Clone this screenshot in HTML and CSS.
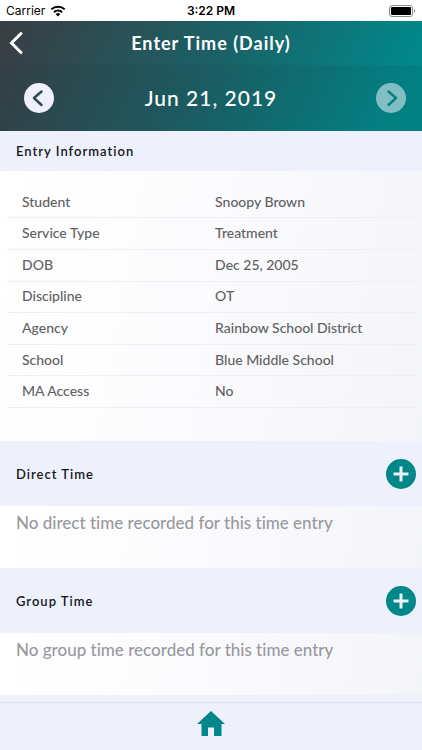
FILE: index.html
```html
<!DOCTYPE html>
<html lang="en">
<head>
<meta charset="utf-8">
<meta name="viewport" content="width=device-width, initial-scale=1">
<title>Enter Time (Daily)</title>
<link rel="stylesheet" href="styles.css">
</head>
<body>
<div class="app">
  <div class="status">
    <div class="carrier">Carrier
      <svg width="16" height="12" viewBox="0 0 16 12" aria-hidden="true"><g fill="none" stroke="#000" stroke-width="2"><path d="M1.3 4.4a9.6 9.6 0 0 1 13.4 0"/><path d="M3.9 7.2a5.9 5.9 0 0 1 8.2 0"/></g><path d="M5.7 9.2a3.3 3.3 0 0 1 4.6 0L8 11.6z"/></svg>
    </div>
    <div class="clock">3:22 PM</div>
    <svg class="battery" width="27" height="12" viewBox="0 0 27 12" aria-hidden="true"><rect x=".5" y=".5" width="23" height="11" rx="2.5" fill="none" stroke="#8a8a8a"/><rect x="2" y="2" width="20" height="8" rx="1"/><path d="M25 4v4c1.600-.5 1.600-3.500 0-4z" fill="#8a8a8a"/></svg>
  </div>
  <header class="top">
    <div class="nav">
      <button class="back" aria-label="Back"><svg width="16" height="24" viewBox="0 0 16 24"><path d="M13 2.500L3.500 12l9.500 9.500" fill="none" stroke="#fff" stroke-width="3" stroke-linecap="round"/></svg></button>
      <h1>Enter Time (Daily)</h1>
    </div>
    <div class="date">
      <button class="round prev" aria-label="Previous day"><svg width="30" height="30" viewBox="0 0 30 30"><path d="M17.500 8.500l-7.500 6.500 7.500 7" fill="none" stroke="#2f4b50" stroke-width="2.500" stroke-linecap="round" stroke-linejoin="round"/></svg></button>
      <span>Jun 21, 2019</span>
      <button class="round next" aria-label="Next day"><svg width="30" height="30" viewBox="0 0 30 30"><path d="M12.500 8.500l7.500 6.500-7.500 7" fill="none" stroke="#0a8083" stroke-width="2.500" stroke-linecap="round" stroke-linejoin="round"/></svg></button>
    </div>
  </header>
  <main>
    <div class="bar short"><h2>Entry Information</h2></div>
    <div class="info">
      <table>
        <tr><th scope="row">Student</th><td>Snoopy Brown</td></tr>
        <tr><th scope="row">Service Type</th><td>Treatment</td></tr>
        <tr><th scope="row">DOB</th><td>Dec 25, 2005</td></tr>
        <tr><th scope="row">Discipline</th><td>OT</td></tr>
        <tr><th scope="row">Agency</th><td>Rainbow School District</td></tr>
        <tr><th scope="row">School</th><td>Blue Middle School</td></tr>
        <tr><th scope="row">MA Access</th><td>No</td></tr>
      </table>
    </div>
    <div class="bar"><h2>Direct Time</h2>
      <button class="add" aria-label="Add direct time"><svg width="30" height="30" viewBox="0 0 30 30"><path d="M7.500 15h15M15 7.500v15" stroke="#eef0fc" stroke-width="3"/></svg></button>
    </div>
    <p class="empty">No direct time recorded for this time entry</p>
    <div class="bar"><h2>Group Time</h2>
      <button class="add" aria-label="Add group time"><svg width="30" height="30" viewBox="0 0 30 30"><path d="M7.500 15h15M15 7.500v15" stroke="#eef0fc" stroke-width="3"/></svg></button>
    </div>
    <p class="empty">No group time recorded for this time entry</p>
  </main>
  <footer>
    <a href="#" aria-label="Home"><svg width="28" height="26" viewBox="0 0 28 26"><path d="M14 0L28 13h-3.500V25H17V16.500h-6V25H4.500V13H0z" fill="#00878a"/></svg></a>
  </footer>
</div>
</body>
</html>
```
FILE: styles.css
```css
* { box-sizing: border-box; }
body { margin: 0; font-family: Lato, "Noto Sans", sans-serif; font-variant-ligatures: none; }
button { padding: 0; border: 0; background: none; display: flex; }
svg { display: block; }
.app { display: flex; flex-direction: column; min-height: 100vh; }

.status { display: grid; grid-template-columns: 1fr auto 1fr; align-items: center; height: 21px; padding: 0 6px; background: #fff; color: #000; font: 12px/21px Inter, sans-serif; }
.carrier { display: flex; align-items: center; gap: 5px; }
.clock { font-weight: 600; }
.battery { justify-self: end; }

.top { background: linear-gradient(115deg, #3a3d43 0%, #1a6267 50%, #00898b 92%); color: #fff; }
.nav { display: grid; grid-template-columns: 24px 1fr 24px; align-items: center; height: 44px; padding: 0 8px; }
h1 { margin: 0; font-size: 18px; font-weight: 700; letter-spacing: 1px; text-align: center; }
.date { display: grid; grid-template-columns: 1fr auto 1fr; align-items: center; height: 66px; padding: 0 16px; background: rgba(30, 50, 60, .1); font-size: 21px; line-height: 26px; font-weight: 500; letter-spacing: 1px; }
.round, .add { border-radius: 50%; background: #eef0fc; }
.prev { justify-self: start; margin-left: 8px; }
.next { justify-self: end; background: #7fbfc3; }

main { flex: 1; background: #eef0fc; }
.bar { display: flex; align-items: center; justify-content: space-between; height: 65px; padding: 0 6px 0 16px; background: #eef0fc; }
.short { height: 40px; }
h2 { margin: 0; color: #15171c; font-size: 13px; line-height: 18px; font-weight: 600; letter-spacing: 1px; }
.add { background: #00878a; }

.info, .empty { background: linear-gradient(100deg, #fff 0%, #fcfcfe 40%, #f4f5f9 100%); }
.info { padding: 16px 7px 33px; }
table { width: 100%; height: 221px; border-collapse: collapse; table-layout: fixed; color: #606163; font-size: 14px; line-height: 20px; }
th, td { padding: 0 0 1px; border-bottom: 1px solid #eeeff5; text-align: left; font-weight: 500; }
th { width: 51%; padding-left: 15px; }
.empty { margin: 0; height: 62px; padding: 5px 16px; color: #98999f; font-size: 17px; font-weight: 500; line-height: 24px; }

footer { display: flex; justify-content: center; height: 48px; padding-top: 8px; border-top: 1px solid #dfe2ef; background: #eef0fc; }
```
